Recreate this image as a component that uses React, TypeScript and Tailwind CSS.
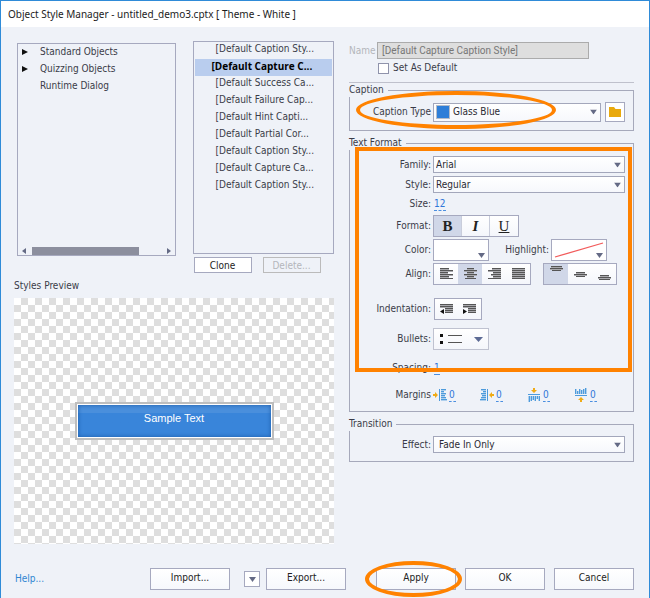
import type { ReactNode } from "react";

const treeItems = [
  { label: "Standard Objects", expandable: true },
  { label: "Quizzing Objects", expandable: true },
  { label: "Runtime Dialog", expandable: false },
];

const styleNames = [
  "[Default Caption Sty...",
  "[Default Capture C...",
  "[Default Success Ca...",
  "[Default Failure Cap...",
  "[Default Hint Capti...",
  "[Default Partial Cor...",
  "[Default Caption Sty...",
  "[Default Capture Ca...",
  "[Default Caption Sty...",
];

function Caret({ className = "" }: { className?: string }) {
  return (
    <svg className={`pointer-events-none ${className}`} width="7" height="5" viewBox="0 0 7 5" aria-hidden="true">
      <path d="M0 0h7L3.5 5z" fill="#646a85" />
    </svg>
  );
}

function Select({ id, value, className = "" }: { id: string; value: string; className?: string }) {
  return (
    <div className="relative min-w-0 flex-1">
      <select
        id={id}
        className={`block w-full appearance-none border border-[#a3a7bb] bg-linear-to-b from-white to-[#f6f8fc] pr-5 text-[#2a2a33] ${className}`}
      >
        <option>{value}</option>
      </select>
      <Caret className="absolute top-1/2 right-1 -translate-y-1/2" />
    </div>
  );
}

function Row({ label, htmlFor, className = "", children }: { label: string; htmlFor?: string; className?: string; children: ReactNode }) {
  return (
    <div className={`flex items-center ${className}`}>
      <label htmlFor={htmlFor} className="w-[83px] shrink-0 pr-0.5 text-right whitespace-nowrap">
        {label}
      </label>
      {children}
    </div>
  );
}

function Group({ title, className = "", children }: { title: string; className?: string; children: ReactNode }) {
  return (
    <fieldset className={`relative min-w-0 border border-[#a6a9bb] pr-2 ${className}`}>
      <legend className="-ml-px h-[14px] bg-[#eff2f8] pr-1 leading-[14px]">{title}</legend>
      {children}
    </fieldset>
  );
}

function Tool({ label, pressed = false, className = "", children }: { label: string; pressed?: boolean; className?: string; children: ReactNode }) {
  return (
    <button
      type="button"
      aria-label={label}
      aria-pressed={pressed}
      className={`flex h-full items-center justify-center ${pressed ? "bg-[#d0d7e8]" : "bg-linear-to-b from-white to-[#f4f6fb]"} ${className}`}
    >
      {children}
    </button>
  );
}

function Lines({ rows }: { rows: [number, number, number][] }) {
  return (
    <svg width="13" height="12" viewBox="0 0 13 12" shapeRendering="crispEdges" aria-hidden="true">
      {rows.map(([x, y, w], i) => (
        <g key={i}>
          <rect x={x} y={y} width={w} height="1" fill="#555" />
          {i < rows.length - 1 && <rect x={x} y={y + 1} width={w} height="1" fill="#a9a9ad" />}
        </g>
      ))}
    </svg>
  );
}

const alignIcons: { label: string; rows: [number, number, number][] }[] = [
  { label: "Align left", rows: [[0, 0, 9], [0, 2, 13], [0, 4, 8], [0, 6, 13], [0, 8, 9], [0, 10, 13]] },
  { label: "Align center", rows: [[3, 0, 7], [0, 2, 13], [3, 4, 7], [0, 6, 13], [3, 8, 7], [1, 10, 11]] },
  { label: "Align right", rows: [[4, 0, 9], [0, 2, 13], [5, 4, 8], [3, 6, 10], [5, 8, 8], [0, 10, 13]] },
  { label: "Justify", rows: [[0, 0, 13], [0, 2, 13], [0, 4, 13], [0, 6, 13], [0, 8, 13], [0, 10, 13]] },
];

const verticalIcons: { label: string; rows: [number, number, number][] }[] = [
  { label: "Align top", rows: [[1, 0, 11], [0, 2, 13], [2, 4, 9]] },
  { label: "Align middle", rows: [[2, 4, 9], [0, 6, 13], [2, 8, 9]] },
  { label: "Align bottom", rows: [[2, 7, 9], [0, 9, 13], [1, 11, 11]] },
];

function HotNumber({ id, label, value, className }: { id: string; label: string; value: string; className: string }) {
  return (
    <input
      id={id}
      aria-label={label}
      defaultValue={value}
      className={`h-[13px] border-b border-dashed border-[#4b8fe0] bg-transparent text-[#2f76d8] ${className}`}
    />
  );
}

const marginBars = [5, 3, 5, 4, 5, 6];

function MarginIcon({ side }: { side: string }) {
  const turn = side === "right" ? "-scale-x-100" : side === "top" ? "rotate-90" : side === "bottom" ? "-rotate-90" : "";
  return (
    <svg className={turn} width="14" height="14" viewBox="0 0 14 14" aria-hidden="true">
      <path d="M0 6h2V4l3 3-3 3V8H0z" fill="#f0ab16" />
      <g fill="#4d9bdc" shapeRendering="crispEdges">
        <rect x="6" y="1" width="1" height="12" />
        {marginBars.map((w, i) => (
          <g key={i}>
            <rect x="8" y={1 + i * 2} width={w} height="1" />
            <rect x="8" y={2 + i * 2} width={w} height="1" opacity="0.4" />
          </g>
        ))}
      </g>
    </svg>
  );
}

function DialogButton({ children }: { children: ReactNode }) {
  return (
    <button
      type="button"
      className="h-[22px] w-20 border border-[#a6a9bf] bg-linear-to-b from-white to-[#f6f8fc] pb-0.5 text-[#222]"
    >
      {children}
    </button>
  );
}

export default function App() {
  return (
    <div className="min-h-screen border border-[#2f8bd8] bg-[#eff2f8] font-['DejaVu_Sans_Condensed','DejaVu_Sans',sans-serif] text-[10px] leading-[14px] text-[#3a3c48]">
      <header className="flex h-[26px] items-center bg-white px-[7px]">
        <h1 className="font-['Noto_Sans',sans-serif] text-[#1c1c1c]">
          Object Style Manager - untitled_demo3.cptx [ Theme - White ]
        </h1>
      </header>

      <main className="grid grid-cols-[320fr_285fr] gap-x-[15px] pt-[14px] pr-[15px] pl-[13px]">
        <section>
          <div className="grid grid-cols-[158fr_141fr] items-start gap-x-[17px] pl-[3px]">
            <div className="mt-0.5 flex h-[213px] flex-col border border-[#a6a9bf]">
              <ul className="flex-1">
                {treeItems.map((item) => (
                  <li key={item.label} className="flex h-[17px] items-center pb-0.5 pl-1">
                    <span className="w-[18px]">
                      {item.expandable && (
                        <svg width="6" height="6" viewBox="0 0 6 6" aria-hidden="true">
                          <path d="M0 0l6 3-6 3z" fill="#111" />
                        </svg>
                      )}
                    </span>
                    {item.label}
                  </li>
                ))}
              </ul>
              <div className="flex h-[9px] items-center gap-1.5 px-1">
                <svg width="4" height="6" viewBox="0 0 4 6" aria-hidden="true">
                  <path d="M4 0v6L0 3z" fill="#646a85" />
                </svg>
                <div className="flex h-2 flex-1">
                  <div className="w-5/6 bg-[#8c8f9e]" />
                </div>
                <svg width="4" height="6" viewBox="0 0 4 6" aria-hidden="true">
                  <path d="M0 0v6l4-3z" fill="#646a85" />
                </svg>
              </div>
            </div>
            <div>
              <ul className="h-[213px] border border-[#a6a9bf] px-px">
                {styleNames.map((name, i) => (
                  <li
                    key={i}
                    className={`h-[17px] truncate leading-[14px] ${i === 1 ? "bg-[#b9cdee] pl-[17px] font-['Open_Sans','Noto_Sans',sans-serif] font-bold text-black" : "pl-[21px]"}`}
                  >
                    {name}
                  </li>
                ))}
              </ul>
              <div className="mt-[3px] flex gap-[11px] pl-px">
                <button type="button" className="h-4 w-[58px] border border-[#a6a9bf] bg-white leading-[13px] text-[#222]">
                  Clone
                </button>
                <button type="button" disabled className="h-4 w-[58px] border border-[#bbb] leading-[13px] text-[#b4b6bb]">
                  Delete...
                </button>
              </div>
            </div>
          </div>
          <h2 className="mt-1.5">Styles Preview</h2>
          <div className="mt-[5px] flex h-[246px] items-center justify-center bg-[conic-gradient(#dedede_25%,#fff_0_50%,#dedede_0_75%,#fff_0)] bg-[length:14px_14px]">
            <div className="w-[199px] border-2 border-[#bebebe] bg-white p-px">
              <div className="h-8 bg-linear-to-b from-[#4a8fdc] from-25% to-[#3985da] to-25% pt-1 text-center font-['Liberation_Sans',Arial,sans-serif] text-[11px] leading-[18px] text-white shadow-[inset_0_0_4px_#1d5ba8]">
                Sample Text
              </div>
            </div>
          </div>
        </section>

        <section>
          <div className="mt-px flex items-center">
            <label htmlFor="name" className="w-[28px] text-[#b4b6bb]">
              Name
            </label>
            <input
              id="name"
              disabled
              defaultValue="[Default Capture Caption Style]"
              className="h-[17px] w-[212px] border border-[#ababab] bg-[#dedede] px-1 font-[Roboto,'Noto_Sans',sans-serif] text-[#777]"
            />
          </div>
          <div className="mt-0.5 flex h-[14px] items-center gap-1 pl-[29px]">
            <input
              id="default"
              type="checkbox"
              className="size-[11px] appearance-none border border-[#8f93ab] bg-white"
            />
            <label htmlFor="default">Set As Default</label>
          </div>
          <hr className="mt-[7px] border-[#bfc1cc]" />

          <Group title="Caption" className="pt-[5px] pb-2">
            <Row label="Caption Type" htmlFor="caption-type">
              <Select id="caption-type" value="Glass Blue" className="h-[19px] pl-[19px]" />
              <span className="absolute left-[86px] size-[14px] border border-[#b5bcc8] bg-[#2e7ed8]" />
              <button
                type="button"
                aria-label="Browse"
                className="ml-1 flex size-5 items-center justify-center border border-[#a6a9bf] bg-white"
              >
                <svg width="14" height="12" viewBox="0 0 14 12" aria-hidden="true">
                  <path d="M1 1h5l1.500 2H13v8H1z" fill="#e9a90c" />
                </svg>
              </button>
            </Row>
            <div className="pointer-events-none absolute -top-1.5 left-1.5 h-[38px] w-[200px] rounded-[50%] border-4 border-[#ff8200]" />
          </Group>

          <Group title="Text Format" className="mt-[5px] pt-1.5 pb-[9px]">
            <Row label="Family:" htmlFor="family">
              <Select id="family" value="Arial" className="h-[17px] pl-0.5" />
            </Row>
            <Row label="Style:" htmlFor="style" className="mt-[3px]">
              <Select id="style" value="Regular" className="h-[17px] pl-0.5" />
            </Row>
            <Row label="Size:" htmlFor="size" className="mt-1">
              <HotNumber id="size" label="Size" value="12" className="ml-px w-3" />
            </Row>
            <Row label="Format:" className="mt-1">
              <div className="flex h-[22px] divide-x divide-[#c9cddb] border border-[#a6a9bf] font-['Liberation_Serif',serif] text-[15px] font-bold text-[#222]">
                <Tool label="Bold" pressed className="w-7">B</Tool>
                <Tool label="Italic" className="w-7 italic">I</Tool>
                <Tool label="Underline" className="w-7 font-normal underline">U</Tool>
              </div>
            </Row>
            <Row label="Color:" className="mt-0.5">
              <button type="button" aria-label="Color" className="relative h-[22px] w-14 border border-[#a6a9bf] bg-white">
                <Caret className="absolute right-[3px] bottom-0.5" />
              </button>
              <span className="ml-auto pr-0.5">Highlight:</span>
              <button type="button" aria-label="Highlight" className="relative mr-[18px] h-[22px] w-14 border border-[#a6a9bf] bg-white">
                <svg className="absolute inset-0" width="54" height="20" viewBox="0 0 54 20" aria-hidden="true">
                  <path d="M3 17L51 3" stroke="#f25b5b" strokeWidth="1.300" />
                </svg>
                <Caret className="absolute right-[3px] bottom-0.5" />
              </button>
            </Row>
            <Row label="Align:" className="mt-0.5">
              <div className="flex h-[22px] border border-[#a6a9bf]">
                {alignIcons.map((icon, i) => (
                  <Tool key={icon.label} label={icon.label} pressed={i === 1} className="w-6">
                    <Lines rows={icon.rows} />
                  </Tool>
                ))}
              </div>
              <div className="ml-auto mr-2 flex h-[22px] border border-[#a6a9bf]">
                {verticalIcons.map((icon, i) => (
                  <Tool key={icon.label} label={icon.label} pressed={i === 0} className={i === 0 ? "w-6 pb-1" : "w-6"}>
                    <Lines rows={icon.rows} />
                  </Tool>
                ))}
              </div>
            </Row>
            <Row label="Indentation:" className="mt-[13px]">
              <div className="ml-px flex h-[22px] border border-[#a6a9bf]">
                {["M4 6v5L0 8.500z", "M0 6v5l4-2.500z"].map((arrow, i) => (
                  <Tool key={arrow} label={i === 0 ? "Decrease indent" : "Increase indent"} className="w-[23px]">
                    <svg width="13" height="12" viewBox="0 0 13 12" aria-hidden="true">
                      <g fill="#a9a9ad" shapeRendering="crispEdges">
                        <rect y="1" width="13" height="4" />
                        <rect x="5" y="5" width="8" height="5" />
                      </g>
                      <g fill="#555" shapeRendering="crispEdges">
                        <rect y="1" width="13" height="1" />
                        <rect y="3" width="13" height="1" />
                        <rect x="5" y="5" width="8" height="1" />
                        <rect x="5" y="7" width="8" height="1" />
                        <rect x="5" y="9" width="8" height="1" />
                      </g>
                      <path d={arrow} fill="#111" />
                    </svg>
                  </Tool>
                ))}
              </div>
            </Row>
            <Row label="Bullets:" className="mt-2">
              <button
                type="button"
                aria-label="Bullets"
                className="flex h-[22px] w-14 items-center justify-between border border-[#bfc2d0] bg-linear-to-b from-white to-[#f4f6fb] pr-[5px] pl-1.5"
              >
                <svg width="22" height="12" viewBox="0 0 22 12" shapeRendering="crispEdges" aria-hidden="true">
                  <rect y="1" width="3" height="3" fill="#111" />
                  <rect y="8" width="3" height="3" fill="#111" />
                  <rect x="8" y="2" width="14" height="1" fill="#555" />
                  <rect x="8" y="9" width="14" height="1" fill="#555" />
                </svg>
                <svg width="9" height="5" viewBox="0 0 9 5" aria-hidden="true">
                  <path d="M0 0h9L4.500 5z" fill="#5c6a94" />
                </svg>
              </button>
            </Row>
            <Row label="Spacing:" htmlFor="spacing" className="mt-[11px]">
              <HotNumber id="spacing" label="Spacing" value="1" className="ml-px w-1.5" />
            </Row>
            <Row label="Margins" className="mt-[13px]">
              {["left", "right", "top", "bottom"].map((side) => (
                <span key={side} className="flex w-[47px] items-center gap-0.5">
                  <MarginIcon side={side} />
                  <HotNumber id={`margin-${side}`} label={`Margin ${side}`} value="0" className="w-[7px]" />
                </span>
              ))}
            </Row>
            <div className="pointer-events-none absolute -top-[3px] left-[5px] right-px h-[225px] border-4 border-[#ff8200]" />
          </Group>

          <Group title="Transition" className="mt-[5px] pt-[5px] pb-2">
            <Row label="Effect:" htmlFor="effect">
              <Select id="effect" value="Fade In Only" className="h-[17px] pl-[5px]" />
            </Row>
          </Group>
        </section>
      </main>

      <footer className="flex items-center justify-between pt-6 pr-[15px] pb-2 pl-[14px]">
        <a href="#help" className="w-[105px] text-[#2f86d2]">
          Help...
        </a>
        <div className="flex items-center">
          <DialogButton>Import...</DialogButton>
          <button
            type="button"
            aria-label="Import options"
            className="mr-1.5 ml-[14px] flex size-4 items-center justify-center border border-[#a6a9bf] bg-white"
          >
            <Caret />
          </button>
          <DialogButton>Export...</DialogButton>
        </div>
        <div className="flex items-center gap-[9px]">
          <div className="relative">
            <DialogButton>Apply</DialogButton>
            <div className="pointer-events-none absolute -inset-y-[7px] -right-1.5 -left-[11px] rounded-[50%] border-4 border-[#ff8200]" />
          </div>
          <DialogButton>OK</DialogButton>
          <DialogButton>Cancel</DialogButton>
        </div>
      </footer>
    </div>
  );
}
